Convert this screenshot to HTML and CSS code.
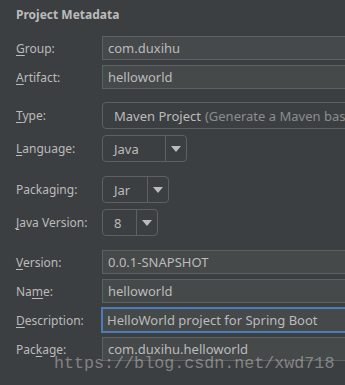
FILE: index.html
```html
<!DOCTYPE html>
<html>
<head>
<meta charset="utf-8">
<link rel="stylesheet" href="styles.css">
</head>
<body>
<div class="panel">
  <div class="title">Project Metadata</div>
  <div class="section s1">
    <div class="row"><label class="lbl"><u>G</u>roup:</label><div class="field">com.duxihu</div></div>
    <div class="row"><label class="lbl"><u>A</u>rtifact:</label><div class="field">helloworld</div></div>
  </div>
  <div class="section s2">
    <div class="row"><label class="lbl"><u>T</u>ype:</label><div class="combo wide"><span class="val">Maven Project <span class="hint">(Generate a Maven based project archive)</span></span></div></div>
    <div class="row r6"><label class="lbl"><u>L</u>anguage:</label><div class="combo lang"><span class="val">Java</span><span class="arrow"></span></div></div>
  </div>
  <div class="section s3">
    <div class="row"><label class="lbl">Packaging:</label><div class="combo pack"><span class="val">Jar</span><span class="arrow"></span></div></div>
    <div class="row r6"><label class="lbl"><u>J</u>ava Version:</label><div class="combo jv"><span class="val">8</span><span class="arrow"></span></div></div>
  </div>
  <div class="section s3">
    <div class="row"><label class="lbl"><u>V</u>ersion:</label><div class="field">0.0.1-SNAPSHOT</div></div>
    <div class="row"><label class="lbl">Na<u>m</u>e:</label><div class="field">helloworld</div></div>
    <div class="row"><label class="lbl"><u>D</u>escription:</label><div class="field focus">HelloWorld project for Spring Boot</div></div>
    <div class="row"><label class="lbl">Pac<u>k</u>age:</label><div class="field">com.duxihu.helloworld</div></div>
  </div>
  <div class="watermark">https://blog.csdn.net/xwd718</div>
</div>
</body>
</html>
```
FILE: styles.css
```css
html, body {
  margin: 0;
  padding: 0;
  background: #3c3f41;
}
.panel {
  position: relative;
  width: 345px;
  height: 385px;
  overflow: hidden;
  background: #3c3f41;
  color: #bbbbbb;
  font-family: "Noto Sans", sans-serif;
  font-size: 12px;
}
.title {
  font-weight: bold;
  padding: 6px 0 0 16px;
  height: 36px;
  box-sizing: border-box;
  line-height: 17px;
}
.section {
  display: flex;
  flex-direction: column;
  gap: 5px;
}
.s2 { margin-top: 13px; }
.s3 { margin-top: 14px; }
.s2 .r6, .s3 .r6 { margin-top: 1px; }
.row {
  display: flex;
  align-items: center;
  padding-left: 16px;
}
.lbl {
  width: 86px;
  flex: none;
  white-space: nowrap;
  font-size: 12px;
}
u {
  text-decoration: underline;
  text-underline-offset: 2px;
  text-decoration-thickness: 1px;
}
.field {
  flex: none;
  width: 260px;
  height: 24px;
  box-sizing: border-box;
  background: #45494a;
  border: 1px solid #5e6162;
  padding-left: 5px;
  display: flex;
  align-items: center;
  white-space: nowrap;
  overflow: hidden;
  font-size: 13px;
}
.field.focus {
  border: 2px solid #4a7cb5;
  padding-left: 4px;
  margin-left: -1px;
  width: 262px;
  height: 26px;
  margin-top: -1px;
  margin-bottom: -1px;
}
.combo {
  flex: none;
  height: 27px;
  box-sizing: border-box;
  border: 1px solid #5e6162;
  border-radius: 4px;
  display: flex;
  align-items: stretch;
  white-space: nowrap;
  overflow: hidden;
  font-size: 13px;
}
.combo.wide {
  width: 260px;
  border-radius: 4px 0 0 4px;
}
.combo .val {
  flex: 1;
  display: flex;
  align-items: center;
  padding-left: 11px;
}
.hint {
  color: #8a8d8f;
  margin-left: 4px;
}
.combo .arrow {
  flex: none;
  width: 20px;
  border-left: 1px solid #5e6162;
  display: flex;
  align-items: center;
  justify-content: center;
}
.combo .arrow::after {
  content: "";
  width: 0;
  height: 0;
  border-left: 5px solid transparent;
  border-right: 5px solid transparent;
  border-top: 6px solid #bbbbbb;
}
.lang { width: 85px; }
.pack { width: 67px; }
.jv { width: 56px; }
.watermark {
  position: absolute;
  left: 54px;
  top: 354px;
  font-family: "Liberation Mono", monospace;
  font-size: 16.7px;
  color: rgba(190, 190, 190, 0.55);
  white-space: nowrap;
}
```
